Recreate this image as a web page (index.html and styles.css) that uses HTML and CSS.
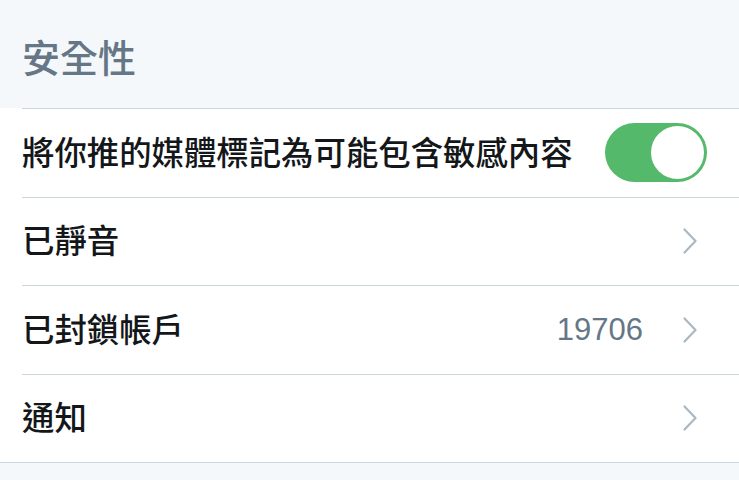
FILE: index.html
```html
<!DOCTYPE html>
<html lang="zh-Hant">
<head>
  <meta charset="UTF-8">
  <title>安全性</title>
  <meta name="viewport" content="width=device-width, initial-scale=1.0">
  <link rel="stylesheet" href="styles.css">
</head>
<body>
  <div class="section-header">安全性</div>
  <div class="settings-list">
    <div class="settings-row">
      <span class="row-label">將你推的媒體標記為可能包含敏感內容</span>
      <div class="toggle on"><span class="toggle-knob"></span></div>
    </div>
    <div class="settings-row">
      <span class="row-label">已靜音</span>
      <svg class="chevron" width="14" height="26" viewBox="0 0 14 26"><polyline points="1.5,1.5 12.5,13 1.5,24.5" fill="none" stroke="#aab8c2" stroke-width="2.2" stroke-linecap="round" stroke-linejoin="round"/></svg>
    </div>
    <div class="settings-row">
      <span class="row-label">已封鎖帳戶</span>
      <span class="row-value">19706</span>
      <svg class="chevron" width="14" height="26" viewBox="0 0 14 26"><polyline points="1.5,1.5 12.5,13 1.5,24.5" fill="none" stroke="#aab8c2" stroke-width="2.2" stroke-linecap="round" stroke-linejoin="round"/></svg>
    </div>
    <div class="settings-row">
      <span class="row-label">通知</span>
      <svg class="chevron" width="14" height="26" viewBox="0 0 14 26"><polyline points="1.5,1.5 12.5,13 1.5,24.5" fill="none" stroke="#aab8c2" stroke-width="2.2" stroke-linecap="round" stroke-linejoin="round"/></svg>
    </div>
  </div>
</body>
</html>
```

FILE: styles.css
```css
html, body {
  margin: 0;
  height: 100%;
  background: #f5f8fa;
  font-family: "Noto Sans CJK TC", "Liberation Sans", sans-serif;
  color: #14171a;
}
.section-header {
  height: 108px;
  box-sizing: border-box;
  padding: 3px 0 0 22px;
  display: flex;
  align-items: center;
  font-size: 38px;
  font-weight: 500;
  color: #657786;
}
.settings-list {
  background: #fff;
  border-bottom: 1px solid #ccd6dd;
}
.settings-row {
  display: flex;
  align-items: center;
  margin-left: 22px;
  padding-right: 32px;
  height: 87.5px;
  border-top: 1px solid #ccd6dd;
}
.row-label {
  flex: 1;
  font-size: 32.4px;
  font-weight: 500;
  line-height: 1;
  padding-bottom: 4px;
}
.row-value {
  font-family: "Liberation Sans", sans-serif;
  font-size: 31px;
  color: #657786;
  margin-right: 40px;
}
.chevron {
  margin-right: 10px;
}
.toggle {
  width: 102px;
  height: 59px;
  box-sizing: border-box;
  padding: 3px;
  border-radius: 30px;
  background: #ccd6dd;
  display: flex;
}
.toggle.on {
  background: #55b96b;
  justify-content: flex-end;
}
.toggle-knob {
  width: 53px;
  height: 53px;
  border-radius: 50%;
  background: #fff;
}
```
